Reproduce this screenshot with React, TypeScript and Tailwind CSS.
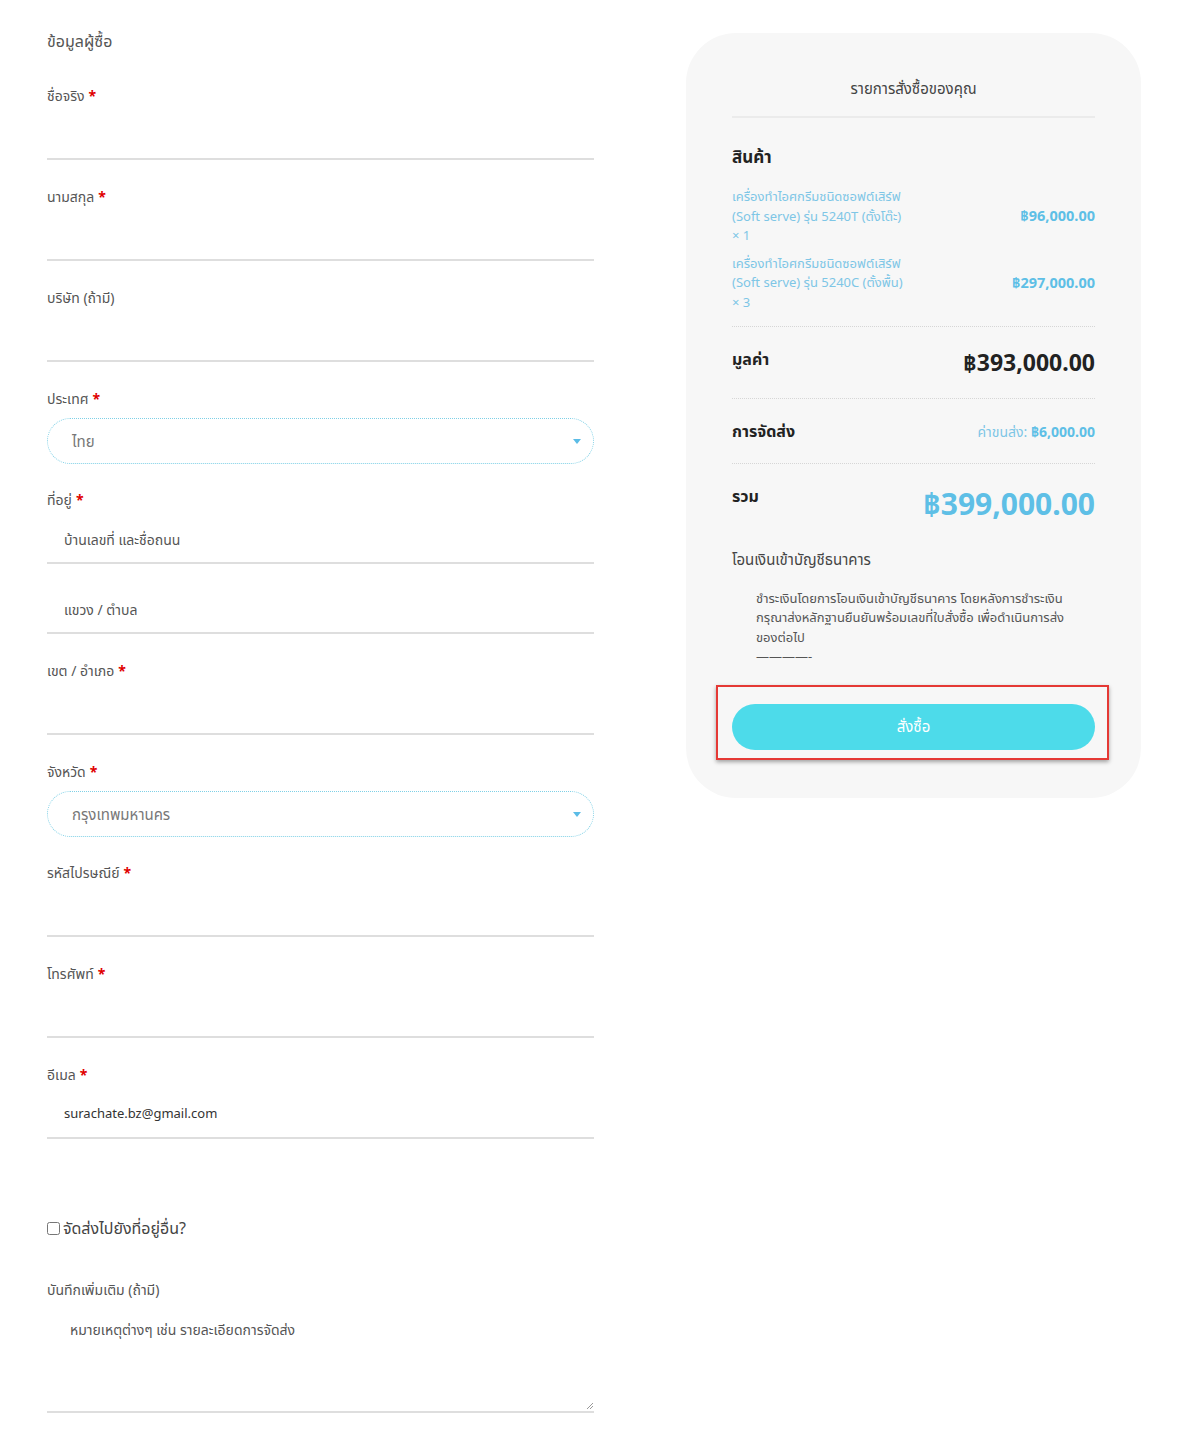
import React from 'react';

const font = { fontFamily: '"Noto Sans", "Noto Sans Thai", "DejaVu Sans", sans-serif' };

function Req() {
  return <span className="ml-1 text-[#e00000] font-bold">*</span>;
}

function TextField({ label, required, value, placeholder }: { label: string; required?: boolean; value?: string; placeholder?: string }) {
  return (
    <div className="mb-[26px]">
      <label className="block h-[22px] text-[14px] leading-[22px] text-[#555]">
        {label}
        {required && <Req />}
      </label>
      <div className="mt-[5px] flex h-[48px] items-center border-b-2 border-[#dedede] px-[17px] text-[14px] text-[#333]">
        {value ? <span className="text-[13px]">{value}</span> : <span className="text-[#555]">{placeholder}</span>}
      </div>
    </div>
  );
}

function SelectField({ label, value }: { label: string; value: string }) {
  return (
    <div className="mb-[25px]">
      <label className="block h-[22px] text-[14px] leading-[22px] text-[#555]">
        {label}
        <Req />
      </label>
      <div className="mt-[8px] flex h-[46px] items-center justify-between rounded-full border border-dotted border-[#7fd0e6] pl-[24px] pr-[12px] text-[15px] text-[#777]">
        <span>{value}</span>
        <svg width="8" height="5" viewBox="0 0 8 5">
          <path d="M0 0 H8 L4 5 Z" fill="#5bbce6" />
        </svg>
      </div>
    </div>
  );
}

function ItemRow({ name, model, qty, price }: { name: string; model: string; qty: string; price: string }) {
  return (
    <div className="flex items-center justify-between">
      <div className="text-[13px] leading-[19.5px] text-[#7ec6e6]">
        <div>{name}</div>
        <div>{model}</div>
        <div>× {qty}</div>
      </div>
      <div className="text-[14.5px] font-bold text-[#5ebfe6]">{price}</div>
    </div>
  );
}

export default function App() {
  return (
    <div className="min-h-[1444px] bg-white" style={font}>
      <div className="flex items-start pl-[47px] pt-[29px]">
        {/* ฟอร์มข้อมูลผู้ซื้อ */}
        <div className="w-[547px]">
          <h3 className="mb-[32px] text-[16px] leading-[24px] text-[#555]">ข้อมูลผู้ซื้อ</h3>
          <TextField label="ชื่อจริง" required />
          <TextField label="นามสกุล" required />
          <TextField label="บริษัท (ถ้ามี)" />
          <SelectField label="ประเทศ" value="ไทย" />
          <div className="mb-[26px]">
            <label className="block h-[22px] text-[14px] leading-[22px] text-[#555]">
              ที่อยู่
              <Req />
            </label>
            <div className="mt-[5px] flex h-[48px] items-center border-b-2 border-[#dedede] px-[17px] text-[14px] text-[#555]">
              บ้านเลขที่ และชื่อถนน
            </div>
            <div className="mt-[22px] flex h-[48px] items-center border-b-2 border-[#dedede] px-[17px] text-[14px] text-[#555]">
              แขวง / ตำบล
            </div>
          </div>
          <TextField label="เขต / อำเภอ" required />
          <SelectField label="จังหวัด" value="กรุงเทพมหานคร" />
          <TextField label="รหัสไปรษณีย์" required />
          <TextField label="โทรศัพท์" required />
          <TextField label="อีเมล" required value="surachate.bz@gmail.com" />

          <label className="mt-[77px] flex h-[24px] items-center gap-[3px] text-[16px] text-[#444]">
            <input type="checkbox" className="h-[13px] w-[13px]" />
            จัดส่งไปยังที่อยู่อื่น?
          </label>

          <div className="mt-[39px]">
            <label className="block h-[22px] text-[14px] leading-[22px] text-[#555]">บันทึกเพิ่มเติม (ถ้ามี)</label>
            <div className="relative mt-[19px] h-[93px] border-b-2 border-[#dedede] px-[23px] text-[14px] leading-[20px] text-[#555]">
              หมายเหตุต่างๆ เช่น รายละเอียดการจัดส่ง
              <svg className="absolute bottom-[1px] right-0" width="9" height="9" viewBox="0 0 9 9">
                <path d="M8 2 L2 8 M8 5 L5 8" stroke="#999" strokeWidth="1" />
              </svg>
            </div>
          </div>
        </div>

        {/* สรุปรายการสั่งซื้อ */}
        <div className="ml-[92px] mt-[4px] w-[455px] rounded-[50px] bg-[#f7f7f7] px-[46px] pb-[48px] pt-[44px]">
          <div className="border-b-2 border-[#ebebeb] pb-[16px] text-center text-[15px] text-[#444]">รายการสั่งซื้อของคุณ</div>
          <div className="mt-[26px] text-[17px] font-bold text-[#222]">สินค้า</div>
          <div className="mt-[18px] flex flex-col gap-[8px] border-b border-dotted border-[#d6d6d6] pb-[14px]">
            <ItemRow name="เครื่องทำไอศกรีมชนิดซอฟต์เสิร์ฟ" model="(Soft serve) รุ่น 5240T (ตั้งโต๊ะ)" qty="1" price="฿96,000.00" />
            <ItemRow name="เครื่องทำไอศกรีมชนิดซอฟต์เสิร์ฟ" model="(Soft serve) รุ่น 5240C (ตั้งพื้น)" qty="3" price="฿297,000.00" />
          </div>
          <div className="flex h-[72px] items-center justify-between border-b border-dotted border-[#d6d6d6]">
            <span className="-mt-[8px] text-[16px] font-bold text-[#222]">มูลค่า</span>
            <span className="text-[23px] font-bold text-[#222]">฿393,000.00</span>
          </div>
          <div className="flex h-[65px] items-center justify-between border-b border-dotted border-[#d6d6d6]">
            <span className="text-[16px] font-bold text-[#222]">การจัดส่ง</span>
            <span className="text-[14px] text-[#7ec6e6]">
              ค่าขนส่ง: <b className="text-[#5ebfe6]">฿6,000.00</b>
            </span>
          </div>
          <div className="flex h-[78px] items-center justify-between">
            <span className="-mt-[14px] text-[16px] font-bold text-[#222]">รวม</span>
            <span className="text-[30px] font-bold text-[#5ebfe6]">฿399,000.00</span>
          </div>
          <div className="mt-[6px] text-[15px] text-[#444]">โอนเงินเข้าบัญชีธนาคาร</div>
          <div className="mt-[18px] pl-[24px] text-[13px] leading-[19.5px] text-[#555]">
            ชำระเงินโดยการโอนเงินเข้าบัญชีธนาคาร โดยหลังการชำระเงิน
            <br />
            กรุณาส่งหลักฐานยืนยันพร้อมเลขที่ใบสั่งซื้อ เพื่อดำเนินการส่ง
            <br />
            ของต่อไป
            <div>————-</div>
          </div>
          <div className="relative mt-[37px]">
            <div className="pointer-events-none absolute -bottom-[10px] -left-[16px] -right-[14px] -top-[19px] border-2 border-[#e53935] shadow-[0_2px_4px_rgba(0,0,0,0.35)]" />
            <button className="h-[46px] w-full rounded-full bg-[#4ddbea] text-[15px] text-white">สั่งซื้อ</button>
          </div>
        </div>
      </div>
    </div>
  );
}
